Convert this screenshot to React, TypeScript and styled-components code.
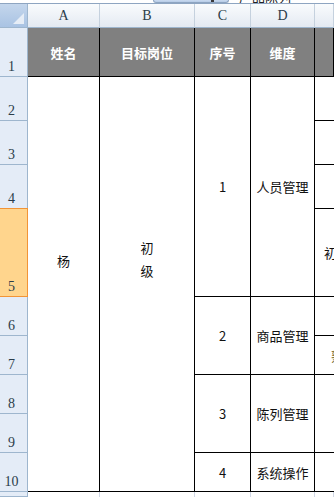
import styled, { createGlobalStyle } from "styled-components";

const GlobalStyle = createGlobalStyle`
  html, body {
    margin: 0;
    padding: 0;
    background: #ffffff;
    overflow: hidden;
  }
`;

const Sheet = styled.div`
  width: 334px;
  height: 497px;
  overflow: hidden;
  display: flex;
  flex-direction: column;
  background: #ffffff;
`;

const FormulaBar = styled.div`
  height: 3px;
  border-bottom: 1px solid #8ea5c1;
  display: flex;
  overflow: hidden;
  background: #ffffff;
`;

const NameTab = styled.div`
  margin-left: 153px;
  width: 76px;
  height: 3px;
  background: linear-gradient(#c9daf0, #b6cbe6);
  border: 1px solid #8ea5c1;
  border-top: none;
  border-radius: 0 0 8px 8px;
  box-sizing: border-box;
  display: flex;
  justify-content: flex-end;
  padding-right: 14px;
`;

const TabMark = styled.span`
  width: 3px;
  height: 2px;
  background: #3a3a3a;
`;

const FormulaText = styled.span`
  margin-left: 10px;
  margin-top: -10px;
  font-family: "Noto Sans CJK SC", sans-serif;
  font-size: 13px;
  line-height: 13px;
  color: #222;
  white-space: nowrap;
`;

const Grid = styled.div`
  display: grid;
  grid-template-columns: 28px 72px 95px 56px 64px 19px;
  grid-template-rows: 24px 49px 44px 44px 44px 88px 39px 39px 39px 39px 39px 5px;
`;

const Corner = styled.div`
  grid-row: 1;
  grid-column: 1;
  background: linear-gradient(#c4d6ec, #a9c3e3);
  border-right: 1px solid #9eb6ce;
  border-bottom: 1px solid #9eb6ce;
  box-sizing: border-box;
  display: flex;
  align-items: flex-end;
  justify-content: flex-end;
  padding: 0 3px 3px 0;
`;

const CornerTriangle = styled.div`
  width: 0;
  height: 0;
  border-left: 11px solid transparent;
  border-bottom: 11px solid #e6edf6;
`;

const ColHead = styled.div<{ $col: number }>`
  grid-row: 1;
  grid-column: ${(p) => p.$col};
  background: linear-gradient(#f9fbfd, #e4eaf2);
  border-right: 1px solid #c5d1de;
  border-bottom: 1px solid #9eb6ce;
  box-sizing: border-box;
  display: flex;
  align-items: center;
  justify-content: center;
  font-family: "Liberation Serif", serif;
  font-size: 14px;
  color: #2b3d4a;
`;

const RowHead = styled.div<{ $row: number; $active?: boolean }>`
  grid-row: ${(p) => p.$row};
  grid-column: 1;
  background: ${(p) => (p.$active ? "#ffd58d" : "#e4ecf7")};
  border-right: 1px solid ${(p) => (p.$active ? "#f29436" : "#9eb6ce")};
  border-bottom: 1px solid ${(p) => (p.$active ? "#f29436" : "#9eb6ce")};
  box-shadow: ${(p) => (p.$active ? "0 -1px 0 #f29436" : "none")};
  box-sizing: border-box;
  display: flex;
  align-items: flex-end;
  justify-content: center;
  padding: 0 4px 1px 0;
  font-family: "Liberation Serif", serif;
  font-size: 14px;
  line-height: 16px;
  color: #2b3d4a;
`;

const TitleCell = styled.div<{ $col: number }>`
  grid-row: 2;
  grid-column: ${(p) => p.$col};
  background: #808080;
  border-right: 1px solid #000;
  border-bottom: 1px solid #000;
  box-sizing: border-box;
  display: flex;
  align-items: center;
  justify-content: center;
  font-family: "Noto Sans CJK SC", sans-serif;
  font-weight: 700;
  font-size: 13px;
  color: #ffffff;
  white-space: nowrap;
  overflow: hidden;
`;

const Cell = styled.div<{
  $row: string;
  $col: number;
  $open?: boolean;
  $lift?: number;
  $left?: number;
}>`
  grid-row: ${(p) => p.$row};
  grid-column: ${(p) => p.$col};
  background: #ffffff;
  border-right: ${(p) => (p.$open ? "none" : "1px solid #000")};
  border-bottom: 1px solid #000;
  box-sizing: border-box;
  display: flex;
  align-items: center;
  justify-content: ${(p) => (p.$left !== undefined ? "flex-start" : "center")};
  padding-left: ${(p) => p.$left ?? 0}px;
  padding-bottom: ${(p) => p.$lift ?? 0}px;
  font-family: "Noto Sans CJK SC", sans-serif;
  font-size: 13px;
  color: #111;
  white-space: nowrap;
  overflow: hidden;
`;

const StackText = styled.span`
  line-height: 23px;
  text-align: center;
`;

const PartialText = styled.span<{ $tone?: string }>`
  color: ${(p) => p.$tone ?? "#111"};
`;

const GapCell = styled.div<{ $col: number }>`
  grid-row: 12;
  grid-column: ${(p) => p.$col};
  border-right: 1px solid #d0d7e5;
  box-sizing: border-box;
`;

const rowNumbers = [1, 2, 3, 4, 5, 6, 7, 8, 9, 10];
const colLetters = ["A", "B", "C", "D", ""];
const titles = ["姓名", "目标岗位", "序号", "维度", ""];

const groups = [
  { row: "3 / 7", no: "1", name: "人员管理" },
  { row: "7 / 9", no: "2", name: "商品管理" },
  { row: "9 / 11", no: "3", name: "陈列管理" },
  { row: "11 / 12", no: "4", name: "系统操作" },
];

export default function App() {
  return (
    <>
      <GlobalStyle />
      <Sheet>
        <FormulaBar>
          <NameTab>
            <TabMark />
          </NameTab>
          <FormulaText>产品陈列</FormulaText>
        </FormulaBar>
        <Grid>
          <Corner>
            <CornerTriangle />
          </Corner>
          {colLetters.map((c, i) => (
            <ColHead key={i} $col={i + 2}>
              {c}
            </ColHead>
          ))}
          {rowNumbers.map((n) => (
            <RowHead key={n} $row={n + 1} $active={n === 5}>
              {n}
            </RowHead>
          ))}
          <RowHead $row={12} />
          {titles.map((t, i) => (
            <TitleCell key={i} $col={i + 2}>
              {t}
            </TitleCell>
          ))}

          <Cell $row="3 / 12" $col={2} $lift={48}>
            杨
          </Cell>
          <Cell $row="3 / 12" $col={3} $lift={50}>
            <StackText>
              初
              <br />
              级
            </StackText>
          </Cell>

          {groups.map((g) => (
            <Cell key={g.no} $row={g.row} $col={4}>
              {g.no}
            </Cell>
          ))}
          {groups.map((g) => (
            <Cell key={g.name} $row={g.row} $col={5}>
              {g.name}
            </Cell>
          ))}

          <Cell $row="3" $col={6} $open />
          <Cell $row="4" $col={6} $open />
          <Cell $row="5" $col={6} $open />
          <Cell $row="6" $col={6} $open $left={9}>
            初级
          </Cell>
          <Cell $row="7" $col={6} $open />
          <Cell $row="8" $col={6} $open $left={16}>
            <PartialText $tone="#6b5a10">熟练</PartialText>
          </Cell>
          <Cell $row="9 / 11" $col={6} $open />
          <Cell $row="11" $col={6} $open />

          {[2, 3, 4, 5, 6].map((c) => (
            <GapCell key={c} $col={c} />
          ))}
        </Grid>
      </Sheet>
    </>
  );
}
